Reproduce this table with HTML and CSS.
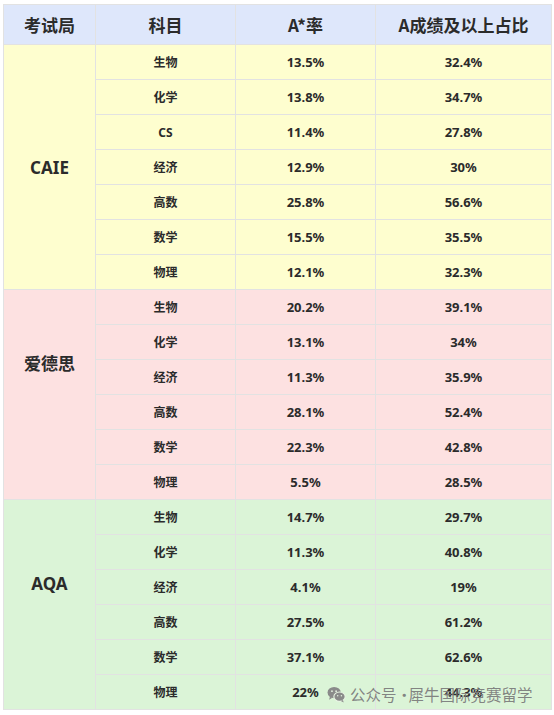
FILE: index.html
```html
<!DOCTYPE html>
<html lang="zh">
<head>
<meta charset="utf-8">
<link rel="stylesheet" href="styles.css">
</head>
<body>
<div class="page">
<table class="grades">
  <colgroup>
    <col class="c1"><col class="c2"><col class="c3"><col class="c4">
  </colgroup>
  <thead>
    <tr class="head"><th>考试局</th><th>科目</th><th>A*率</th><th>A成绩及以上占比</th></tr>
  </thead>
  <tbody class="caie">
    <tr><td class="board" rowspan="7">CAIE</td><td class="subj">生物</td><td>13.5%</td><td>32.4%</td></tr>
    <tr><td class="subj">化学</td><td>13.8%</td><td>34.7%</td></tr>
    <tr><td class="subj">CS</td><td>11.4%</td><td>27.8%</td></tr>
    <tr><td class="subj">经济</td><td>12.9%</td><td>30%</td></tr>
    <tr><td class="subj">高数</td><td>25.8%</td><td>56.6%</td></tr>
    <tr><td class="subj">数学</td><td>15.5%</td><td>35.5%</td></tr>
    <tr><td class="subj">物理</td><td>12.1%</td><td>32.3%</td></tr>
  </tbody>
  <tbody class="edexcel">
    <tr><td class="board" rowspan="6">爱德思</td><td class="subj">生物</td><td>20.2%</td><td>39.1%</td></tr>
    <tr><td class="subj">化学</td><td>13.1%</td><td>34%</td></tr>
    <tr><td class="subj">经济</td><td>11.3%</td><td>35.9%</td></tr>
    <tr><td class="subj">高数</td><td>28.1%</td><td>52.4%</td></tr>
    <tr><td class="subj">数学</td><td>22.3%</td><td>42.8%</td></tr>
    <tr><td class="subj">物理</td><td>5.5%</td><td>28.5%</td></tr>
  </tbody>
  <tbody class="aqa">
    <tr><td class="board" rowspan="6">AQA</td><td class="subj">生物</td><td>14.7%</td><td>29.7%</td></tr>
    <tr><td class="subj">化学</td><td>11.3%</td><td>40.8%</td></tr>
    <tr><td class="subj">经济</td><td>4.1%</td><td>19%</td></tr>
    <tr><td class="subj">高数</td><td>27.5%</td><td>61.2%</td></tr>
    <tr><td class="subj">数学</td><td>37.1%</td><td>62.6%</td></tr>
    <tr><td class="subj">物理</td><td>22%</td><td>44.3%</td></tr>
  </tbody>
</table>
<div class="watermark">
  <svg class="wx" viewBox="0 0 20 18" width="19" height="17" aria-hidden="true">
    <ellipse cx="7.5" cy="7" rx="7" ry="6" fill="#8a8a8a"/>
    <path d="M3 11.5 L2.2 14.5 L5.6 12.4 Z" fill="#8a8a8a"/>
    <ellipse cx="13.2" cy="11.3" rx="6" ry="5" fill="#8a8a8a" stroke="#e8f5e4" stroke-width="1.2"/>
    <path d="M16.8 14.8 L17.6 17.4 L14.6 15.8 Z" fill="#8a8a8a"/>
    <circle cx="5.2" cy="5.5" r="0.9" fill="#e8f5e4"/>
    <circle cx="9.6" cy="5.5" r="0.9" fill="#e8f5e4"/>
    <circle cx="11.3" cy="10.4" r="0.75" fill="#e8f5e4"/>
    <circle cx="15.2" cy="10.4" r="0.75" fill="#e8f5e4"/>
  </svg>
  <span class="wm-text">公众号<span class="dot">·</span>犀牛国际竞赛留学</span>
</div>
</div>
</body>
</html>
```

FILE: styles.css
```css
html, body {
  margin: 0;
  padding: 0;
  background: #ffffff;
}

.page {
  position: relative;
  padding: 4px 3px 0 3px;
  width: 548px;
}

.grades {
  width: 548px;
  border-collapse: collapse;
  table-layout: fixed;
  font-family: "Noto Sans", "Noto Sans CJK SC", sans-serif;
  font-weight: 700;
  color: #2b2b2b;
}

.c1 { width: 92px; }
.c2 { width: 140px; }
.c3 { width: 140px; }
.c4 { width: 176px; }

.grades th,
.grades td {
  border: 1px solid #e2e2e2;
  text-align: center;
  vertical-align: middle;
  padding: 0;
}

.head th {
  height: 39px;
  background: #dee7fb;
  font-size: 17px;
  font-family: "Noto Sans CJK SC", sans-serif;
  font-weight: 700;
}

.grades td {
  height: 34px;
  font-size: 13px;
}

.grades td.subj {
  font-size: 12px;
  font-family: "Noto Sans", "Noto Sans CJK SC", sans-serif;
}

.grades td.board {
  font-size: 17px;
  font-family: "Noto Sans", "Noto Sans CJK SC", sans-serif;
}

.edexcel td.board { padding-bottom: 64px; }
.aqa td.board { padding-bottom: 42px; }

.caie td { background: #fefecf; }
.edexcel td { background: #fde1e1; }
.aqa td { background: #dbf4d7; }

.watermark {
  position: absolute;
  left: 327px;
  top: 683px;
  display: flex;
  align-items: center;
  gap: 4px;
  font-family: "Noto Sans CJK SC", sans-serif;
  font-size: 15.5px;
  color: rgba(125, 125, 125, 0.95);
  white-space: nowrap;
}

.dot {
  display: inline-block;
  width: 12px;
  text-align: center;
}

.wx { display: block; }
```
